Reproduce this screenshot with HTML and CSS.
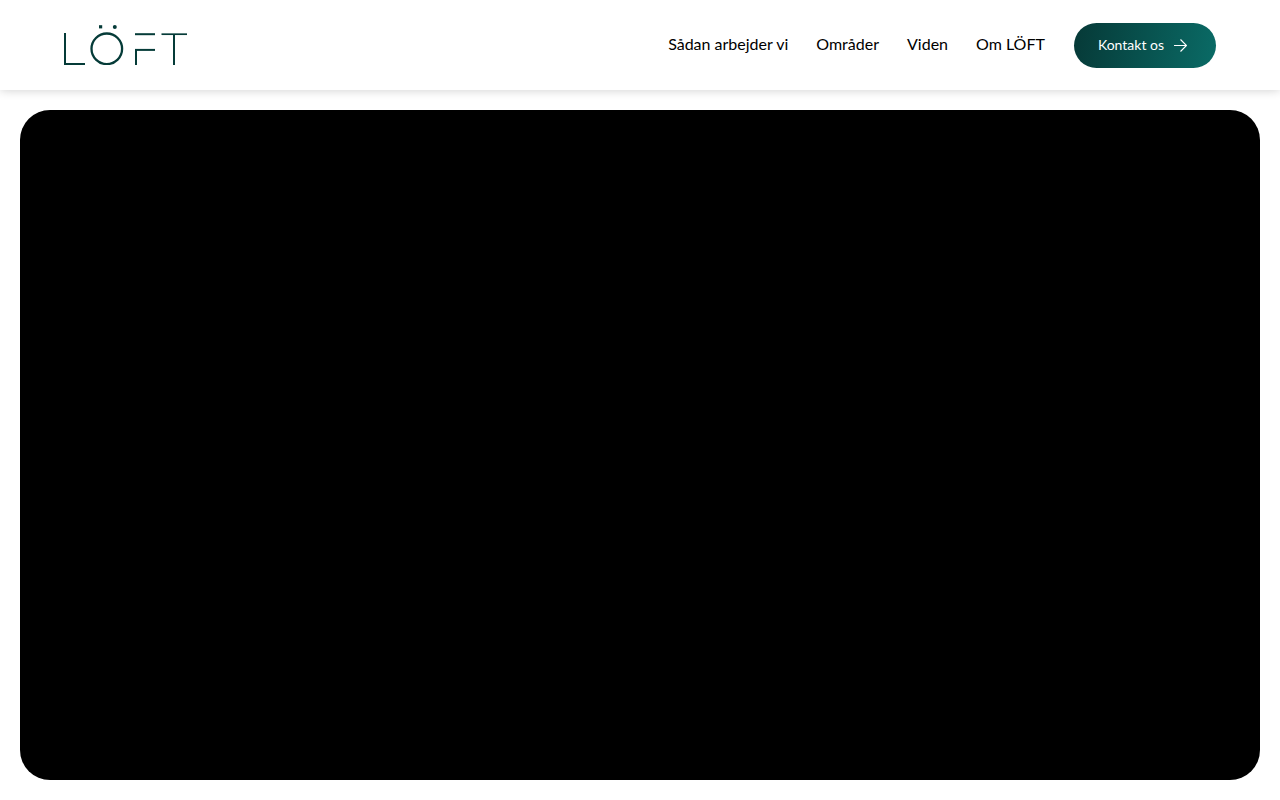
FILE: index.html
```html
<!DOCTYPE html>
<html lang="da">
<head>
  <meta charset="utf-8">
  <title>LÖFT</title>
  <meta name="viewport" content="width=device-width, initial-scale=1.0">
  <link rel="stylesheet" href="styles.css">
</head>
<body>
  <header class="site-header">
    <a href="#" class="logo" aria-label="LÖFT">
      <svg width="123" height="40" viewBox="0 0 123 40" fill="none" stroke="#053b38" stroke-width="2">
        <line x1="1" y1="8" x2="1" y2="40"/>
        <line x1="0" y1="39" x2="21" y2="39"/>
        <circle cx="42.8" cy="23.8" r="15.3" stroke-width="2.3"/>
        <rect x="35" y="0.2" width="3.2" height="3.2" fill="#053b38" stroke="none"/>
        <circle cx="50.8" cy="2" r="2" fill="#053b38" stroke="none"/>
        <line x1="71" y1="9.2" x2="91" y2="9.2"/>
        <line x1="71" y1="24.9" x2="91" y2="24.9"/>
        <line x1="72" y1="25" x2="72" y2="40"/>
        <line x1="97.5" y1="9.2" x2="123" y2="9.2" stroke-width="1.7"/>
        <line x1="110" y1="9" x2="110" y2="40"/>
      </svg>
    </a>
    <nav class="main-nav">
      <a href="#">Sådan arbejder vi</a>
      <a href="#">Områder</a>
      <a href="#">Viden</a>
      <a href="#">Om LÖFT</a>
    </nav>
    <a href="#" class="contact-button">
      <span class="label">Kontakt os</span>
      <svg width="13" height="13" viewBox="0 0 13 13" fill="none" stroke="#fff" stroke-width="1.2">
        <path d="M0 6.5H12.5M6.5 0.5L12.5 6.5L6.5 12.5"/>
      </svg>
    </a>
  </header>

  <main class="content">
    <section class="hero"></section>
  </main>
</body>
</html>
```

FILE: styles.css
```css
* {
  box-sizing: border-box;
}

body {
  margin: 0;
  min-height: 100vh;
  display: flex;
  flex-direction: column;
  background: #fff;
  color: #000;
  font-family: Lato, sans-serif;
}

a {
  color: inherit;
  text-decoration: none;
}

.site-header {
  display: flex;
  align-items: center;
  height: 90px;
  padding: 0 5%;
  box-shadow: 0 0 10px rgba(0, 0, 0, 0.2);
}

.logo {
  display: flex;
  margin-right: auto;
}

.main-nav {
  display: flex;
  gap: 28px;
  padding-bottom: 2px;
  font-size: 16px;
  line-height: 24px;
}

.contact-button {
  display: flex;
  align-items: center;
  gap: 10px;
  height: 45px;
  margin-left: 29px;
  padding: 0 29px 0 24px;
  border-radius: 30px;
  background: linear-gradient(100deg, #063937, #0a6b66);
  color: #fff;
  font-size: 14px;
}

.contact-button .label {
  padding-bottom: 2px;
}

.content {
  flex: 1;
  display: flex;
  padding: 20px;
}

.hero {
  flex: 1;
  border-radius: 30px;
  background: #000;
}
```
